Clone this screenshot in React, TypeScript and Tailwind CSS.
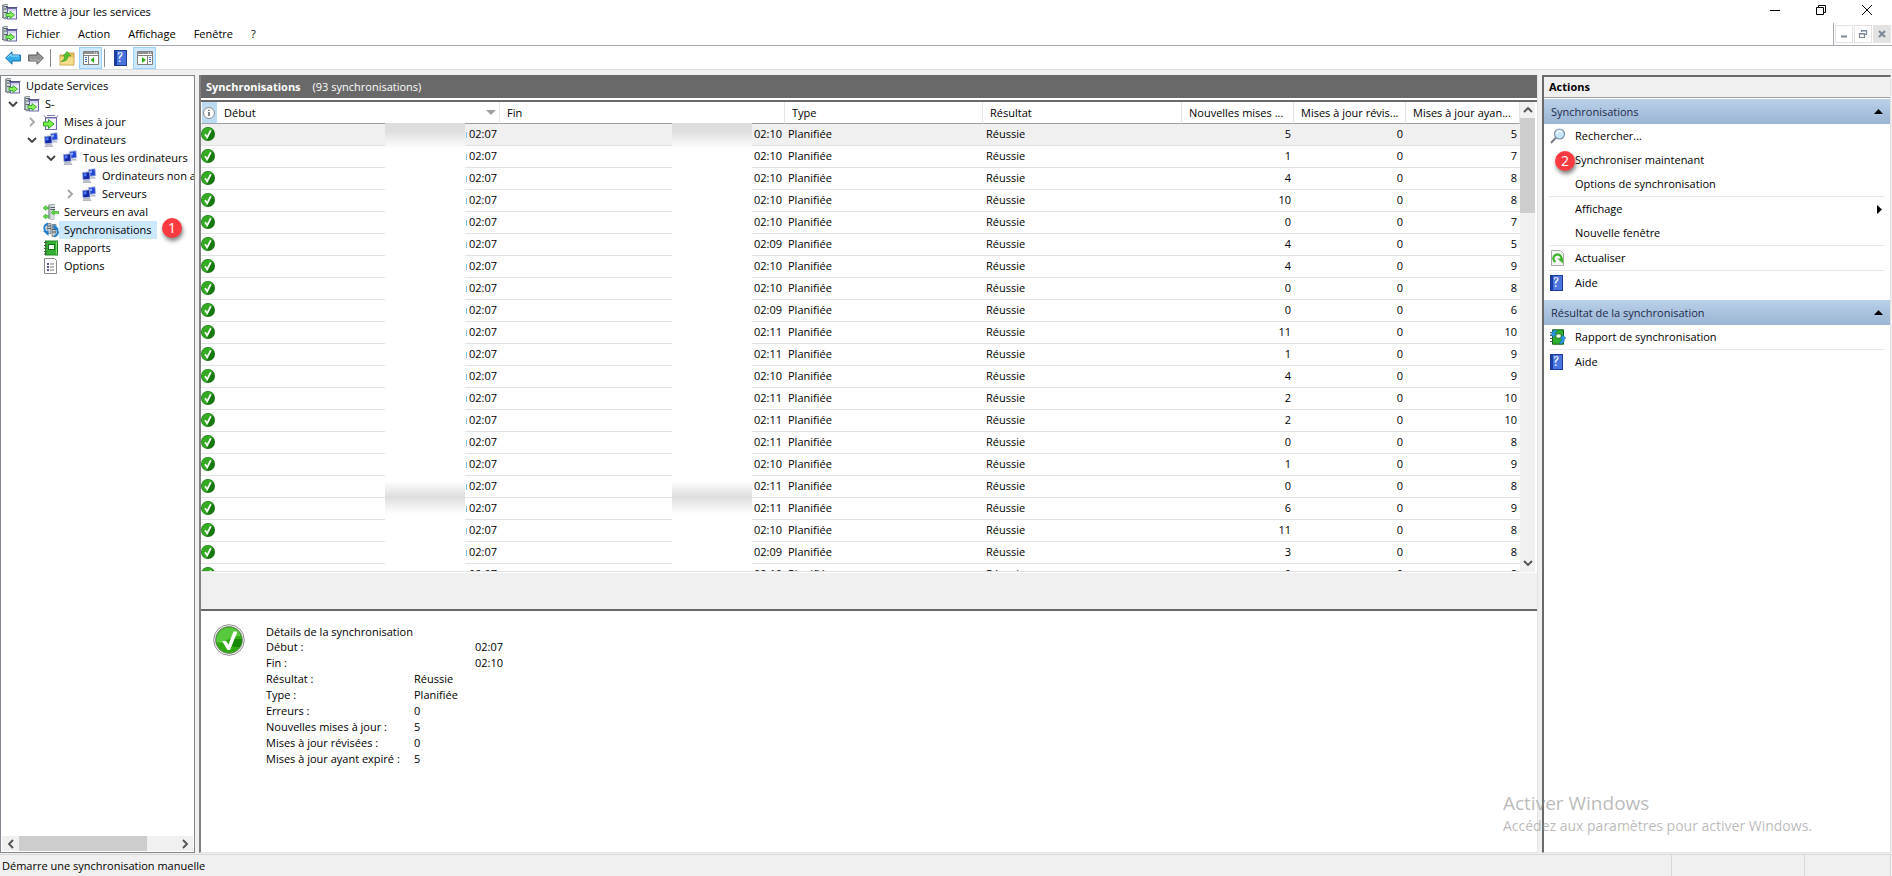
import type { ReactNode } from 'react';
import clsx from 'clsx';

interface IconProps { className?: string; }

function ServicesIcon({ className = 'size-4' }: IconProps) {
  return (
    <svg viewBox="0 0 16 16" className={className} aria-hidden="true">
      <path d="M0 1l2-1h4v14H0z" fill="#8d999c" />
      <path d="M2 1h4v12H2z" fill="#d0d8d9" />
      <path d="M2 2.500h4M2 5h4M2 8.500h4" stroke="#566266" />
      <path d="M0 13l3 2 3-1" fill="none" stroke="#6c7678" />
      <rect x="5.500" y="4.500" width="9" height="10.500" fill="#eeeef8" stroke="#6a68a8" />
      <path d="M4 3.500h11M15 3.500l1-1" stroke="#55538c" />
      <path d="M6 6h8" stroke="#b9b7dd" />
      <path d="M4 9.500h4V7.500l4.500 3.500L8 14.500v-2H4z" fill="#8cf25c" stroke="#2fa52c" strokeWidth=".9" />
    </svg>
  );
}

function UpdatesIcon() {
  return (
    <svg viewBox="0 0 16 16" className="size-4" aria-hidden="true">
      <rect x="2.500" y="3.500" width="11" height="12" fill="#f4f4fc" stroke="#6a68a8" />
      <path d="M1 1.500l1.500 2M15 1.500l-1.500 2M4 1.500h8" stroke="#7d7bab" fill="none" />
      <path d="M3 4.500h10" stroke="#b9b7dd" />
      <path d="M.5 8h5V5.500L11 10l-5.500 4.500V12h-5z" fill="#7af048" stroke="#2fa52c" />
    </svg>
  );
}

function ComputersIcon() {
  return (
    <svg viewBox="0 0 16 16" className="size-4" aria-hidden="true">
      <path d="M7.500 1.500l6.500-.8.800 7-6.300.8z" fill="#2347d8" stroke="#b4bedb" strokeWidth=".9" />
      <path d="M9 2.700l2-.3v2.300l-2 .2z" fill="#8fb0ff" />
      <path d="M10 9h4l1 1.500h-5z" fill="#b7bcc9" />
      <path d="M1.300 4.500l7.400-.8.500 7.500-7.200.7z" fill="#1326a8" stroke="#b4bedb" strokeWidth=".9" />
      <path d="M2.500 5.500l3-.3v3l-3 .2z" fill="#4b7bf5" />
      <path d="M3 12.500h5.500l1.500 2H2z" fill="#c3c7d1" stroke="#8a8f9c" strokeWidth=".5" />
    </svg>
  );
}

function DownstreamIcon() {
  return (
    <svg viewBox="0 0 16 16" className="size-4" aria-hidden="true">
      <path d="M5 1l2-1h5v15l-2 1-5-1z" fill="#a2acae" />
      <path d="M7.500 1H12v14H7.500z" fill="#d8dedf" />
      <path d="M7.500 3.500H12M7.500 5.500H12" stroke="#566266" />
      <path d="M0 4l3-2.500V3h2.500v2H3v1.500zM0 12.500L3 10v1.500h2.500v2H3V15zM8 8.500L11 6v1.500h5v2h-5V11z" fill="#5fd844" stroke="#2a9a22" strokeWidth=".5" />
    </svg>
  );
}

function SyncIcon() {
  return (
    <svg viewBox="0 0 16 16" className="size-4" aria-hidden="true">
      <path d="M4 1.500h4v10H4zM9 2.500h4v12H9z" fill="#c2cacd" stroke="#626c71" strokeWidth=".7" />
      <path d="M4 4h4M4 6.500h4M9 5h4M9 7.500h4M9 10h4" stroke="#4c575c" strokeWidth=".9" />
      <path d="M5 1.500C1 2.500 .5 6 2.500 9.500" fill="none" stroke="#2180cf" strokeWidth="2" />
      <path d="M0 9h5.500v5z" fill="#2180cf" />
      <path d="M11 14.500c4-1 5-4.500 2.500-8" fill="none" stroke="#2180cf" strokeWidth="2" />
      <path d="M16 7h-5.500V2z" fill="#2180cf" />
    </svg>
  );
}

function ReportsIcon() {
  return (
    <svg viewBox="0 0 16 16" className="size-4" aria-hidden="true">
      <rect x="2.500" y="1" width="12" height="14" fill="#35b032" stroke="#1e8524" />
      <rect x="5.500" y="4.500" width="6" height="5" fill="#f4fff2" stroke="#12701a" />
      <path d="M13.500 1.500v13" stroke="#7bdc70" />
      <path d="M1 2.500h3M1 5.500h3M1 8.500h3M1 11.500h3M1 14h3" stroke="#4d5a4d" strokeWidth="1.200" />
    </svg>
  );
}

function OptionsIcon() {
  return (
    <svg viewBox="0 0 16 16" className="size-4" aria-hidden="true">
      <path d="M1.500.5h10l2 2v13h-12z" fill="#fff" stroke="#8a8a8a" />
      <path d="M4 5h2v2H4zM4 8h2v2H4zM4 11h2v2H4z" fill="#58589a" />
      <path d="M7 6h4M7 9h4M7 12h4" stroke="#777" />
    </svg>
  );
}

function HelpIcon() {
  return (
    <span className="flex h-4 w-[13px] items-center justify-center border border-[#1d3a97] bg-linear-to-r from-[#1d3da8] from-20% to-[#4a74de] to-20% font-serif text-sm leading-none text-white" aria-hidden="true">
      ?
    </span>
  );
}

function ToolArrow({ forward = false }: { forward?: boolean }) {
  return (
    <svg viewBox="0 0 16 14" className={clsx('h-3.5 w-4', forward && 'rotate-180')} aria-hidden="true">
      <path d="M.6 7L7 .8V4h8.400v6H7v3.200z" fill={forward ? '#969696' : '#35aeee'} stroke={forward ? '#5b5b5b' : '#1468a8'} />
      <path d="M2.500 6.500L6 3v2h8" fill="none" stroke={forward ? '#b5b5b5' : '#9be0ff'} />
    </svg>
  );
}

function FolderUpIcon() {
  return (
    <svg viewBox="0 0 16 16" className="size-4" aria-hidden="true">
      <path d="M1 5h7l1-2h6v12H1z" fill="#e9c560" stroke="#b98f2e" strokeWidth=".8" />
      <path d="M1.500 7.500h13v7h-13z" fill="#f7dc8c" />
      <path d="M2 11.500c3-1 3.500-3 3.500-5.500H4L8 1.500 12 6H9c0 4-2.500 5.500-7 5.500z" fill="#52c32c" stroke="#2a8a18" strokeWidth=".5" />
    </svg>
  );
}

function PaneIcon({ right = false }: { right?: boolean }) {
  return (
    <svg viewBox="0 0 16 14" className="h-3.5 w-4" aria-hidden="true">
      <path d="M.5.5h15v13H.5z" fill="#fff" stroke="#808080" />
      <path d="M1 1h14v2H1z" fill="#8f8f8f" />
      <path d="M11 2h1M13 2h1" stroke="#fff" />
      <path d={right ? 'M10.500 4v9M1 4.500h14' : 'M5.500 4v9M1 4.500h14'} stroke="#808080" />
      <path d={right ? 'M12 6.500h2M12 8.500h2M12 10.500h2' : 'M2 6.500h2M2 8.500h2M2 10.500h2'} stroke="#3d74b8" />
      <path d={right ? 'M5 6l4 3-4 3z' : 'M11 6L7.500 9l3.500 3z'} fill="#2fae1e" />
    </svg>
  );
}

function SearchIcon() {
  return (
    <svg viewBox="0 0 16 16" className="size-4" aria-hidden="true">
      <path d="M1 15l5-5.500" stroke="#7e7e88" strokeWidth="2" />
      <circle cx="9.500" cy="6" r="5" fill="#c8e6fa" stroke="#7c8fae" strokeWidth="1.200" />
      <path d="M6.500 5.500c1-2.500 4-3 5.500-1" stroke="#fff" strokeWidth="1.500" fill="none" />
    </svg>
  );
}

function RefreshIcon() {
  return (
    <svg viewBox="0 0 16 16" className="size-4" aria-hidden="true">
      <path d="M1.500.5h9l3 3v12h-12z" fill="#f6f6f6" stroke="#a9a9a9" />
      <path d="M5.500 12A4 4 0 1 1 10.500 11" fill="none" stroke="#3cb52c" strokeWidth="2.200" />
      <path d="M7.500 8.500h5.500v5z" fill="#3cb52c" />
    </svg>
  );
}

function SyncReportIcon() {
  return (
    <svg viewBox="0 0 16 16" className="size-4" aria-hidden="true">
      <path d="M2.500.8h11v14.400h-11z" fill="#2fb02c" stroke="#0d5c12" />
      <path d="M6 5h5v4H6z" fill="#f4fff2" stroke="#0d5c12" strokeWidth=".7" />
      <path d="M0 3.500h3M0 6.500h3M0 9.500h3M0 12.500h3" stroke="#4d5a4d" />
      <path d="M6 1C3 1 1.500 2.500 2 5H.5l3 3.500L6.500 5H5c0-1.500.5-2 2-2zM10 15c3.500 0 4.500-2.500 4.500-5.500H16l-3-3.500-3 3.500h1.500c0 2.500-.5 3.500-2 3.500z" fill="#2a94de" stroke="#14609c" strokeWidth=".4" />
    </svg>
  );
}

function Check({ className = 'size-3.5' }: IconProps) {
  return (
    <svg viewBox="0 0 14 14" className={className} aria-hidden="true">
      <circle cx="7" cy="7" r="7" fill="#16780e" />
      <path d="M.8 7.500A6.300 6.300 0 0 1 12 3C9 4.500 7 7 6 13 3 12.800.8 10.500.8 7.500z" fill="#35ab24" />
      <path d="M4 7.300l2.200 3L9.800 3.300" fill="none" stroke="#fff" strokeWidth="1.800" />
    </svg>
  );
}

function BigCheck() {
  return (
    <svg viewBox="0 0 32 32" className="size-8" aria-hidden="true">
      <circle cx="16" cy="16" r="15.300" fill="#fff" stroke="#8a8a8a" />
      <circle cx="16" cy="16" r="13.500" fill="#2faa12" stroke="#777" strokeWidth=".8" />
      <path d="M3.500 18A12.700 12.700 0 0 1 28 12C20 12 13 16 9 19z" fill="#58c93c" />
      <path d="M20 15h9a13 13 0 0 1-2 8c-3 0-7 0-10-2z" fill="#178708" />
      <path d="M9 17l4 0 2.500 3.500L20.500 7.500h4L17 26h-2.500z" fill="#fff" />
    </svg>
  );
}

function Chevron({ dir, className }: { dir: 'up' | 'down' | 'left' | 'right'; className?: string }) {
  const paths = { up: 'M1 7l4-4 4 4', down: 'M1 3l4 4 4-4', left: 'M7 1L3 5l4 4', right: 'M3 1l4 4-4 4' };
  return (
    <svg viewBox="0 0 10 10" className={clsx('size-2.5', className)} aria-hidden="true">
      <path d={paths[dir]} fill="none" stroke="currentColor" strokeWidth="1.800" />
    </svg>
  );
}

function Badge({ children, className }: { children: ReactNode; className?: string }) {
  return (
    <span className={clsx('absolute z-10 flex size-5 items-center justify-center rounded-full bg-[#fb3b41] text-sm text-white shadow-[1px_3px_4px_rgba(0,0,0,0.5)]', className)}>
      {children}
    </span>
  );
}

interface TreeNode { label: string; icon: ReactNode; pad: string; open?: boolean; selected?: boolean; }

const tree: TreeNode[] = [
  { label: 'Update Services', icon: <ServicesIcon />, pad: 'pl-1' },
  { label: 'S-', icon: <ServicesIcon />, pad: 'pl-[23px]', open: true },
  { label: 'Mises à jour', icon: <UpdatesIcon />, pad: 'pl-[42px]', open: false },
  { label: 'Ordinateurs', icon: <ComputersIcon />, pad: 'pl-[42px]', open: true },
  { label: 'Tous les ordinateurs', icon: <ComputersIcon />, pad: 'pl-[61px]', open: true },
  { label: 'Ordinateurs non a', icon: <ComputersIcon />, pad: 'pl-20' },
  { label: 'Serveurs', icon: <ComputersIcon />, pad: 'pl-20', open: false },
  { label: 'Serveurs en aval', icon: <DownstreamIcon />, pad: 'pl-[42px]' },
  { label: 'Synchronisations', icon: <SyncIcon />, pad: 'pl-[42px]', selected: true },
  { label: 'Rapports', icon: <ReportsIcon />, pad: 'pl-[42px]' },
  { label: 'Options', icon: <OptionsIcon />, pad: 'pl-[42px]' },
];

// end time, new updates, revised, expired
const rows: [string, number, number, number][] = [
  ['02:10', 5, 0, 5],
  ['02:10', 1, 0, 7],
  ['02:10', 4, 0, 8],
  ['02:10', 10, 0, 8],
  ['02:10', 0, 0, 7],
  ['02:09', 4, 0, 5],
  ['02:10', 4, 0, 9],
  ['02:10', 0, 0, 8],
  ['02:09', 0, 0, 6],
  ['02:11', 11, 0, 10],
  ['02:11', 1, 0, 9],
  ['02:10', 4, 0, 9],
  ['02:11', 2, 0, 10],
  ['02:11', 2, 0, 10],
  ['02:11', 0, 0, 8],
  ['02:10', 1, 0, 9],
  ['02:11', 0, 0, 8],
  ['02:11', 6, 0, 9],
  ['02:10', 11, 0, 8],
  ['02:09', 3, 0, 8],
  ['02:10', 0, 0, 8],
];

const details = [
  ['Début :', '02:07', true],
  ['Fin :', '02:10', true],
  ['Résultat :', 'Réussie', false],
  ['Type :', 'Planifiée', false],
  ['Erreurs :', '0', false],
  ['Nouvelles mises à jour :', '5', false],
  ['Mises à jour révisées :', '0', false],
  ['Mises à jour ayant expiré :', '5', false],
] as const;

function TitleBar() {
  return (
    <header className="flex h-[23px] items-center pl-0.5">
      <ServicesIcon />
      <h1 className="pl-[5px]">Mettre à jour les services</h1>
      <div className="ml-auto mr-0.5 flex self-start">
        <button aria-label="Réduire" className="flex h-5 w-[46px] items-center justify-center">
          <svg viewBox="0 0 10 10" className="size-2.5"><path d="M0 5.500h10" stroke="#000" /></svg>
        </button>
        <button aria-label="Restaurer" className="flex h-5 w-[46px] items-center justify-center">
          <svg viewBox="0 0 10 10" className="size-2.5"><path d="M.5 2.500h7v7h-7zM2.500 2.500v-2h7v7h-2" fill="none" stroke="#000" /></svg>
        </button>
        <button aria-label="Fermer" className="flex h-5 w-[46px] items-center justify-center">
          <svg viewBox="0 0 10 10" className="size-2.5"><path d="M0 0l10 10M10 0L0 10" stroke="#000" /></svg>
        </button>
      </div>
    </header>
  );
}

function MenuBar() {
  return (
    <div className="flex h-[23px] items-center border-b border-[#a8a8b0] pl-0.5">
      <ServicesIcon />
      <nav className="flex gap-0.5">
        {['Fichier', 'Action', 'Affichage', 'Fenêtre', '?'].map((item) => (
          <button key={item} className="px-2">{item}</button>
        ))}
      </nav>
      <div className="ml-auto flex h-full items-center gap-px border-l border-[#a8a8b0] px-px text-[#7a8898]">
        <button aria-label="Réduire la fenêtre" className="flex size-[18px] items-center justify-center border border-[#e3e3e3]">
          <svg viewBox="0 0 10 10" className="size-2.5"><path d="M2 7.500h6" stroke="currentColor" strokeWidth="2" /></svg>
        </button>
        <button aria-label="Restaurer la fenêtre" className="flex size-[18px] items-center justify-center border border-[#e3e3e3]">
          <svg viewBox="0 0 10 10" className="size-2.5"><path d="M1.500 4.500h5v4h-5zM1 5h6M3.500 3V1.500h5v4H7M3 2h6" fill="none" stroke="currentColor" strokeWidth="1.200" /></svg>
        </button>
        <button aria-label="Fermer la fenêtre" className="flex size-[18px] items-center justify-center bg-[#e3e3e3]">
          <svg viewBox="0 0 10 10" className="size-2.5"><path d="M2 2l6 6M8 2L2 8" stroke="currentColor" strokeWidth="2" /></svg>
        </button>
      </div>
    </div>
  );
}

function ToolBar() {
  return (
    <div className="flex h-6 items-center border-b border-[#dadada] pl-[5px] pt-px">
      <button aria-label="Précédent"><ToolArrow /></button>
      <button aria-label="Suivant" className="ml-[7px]"><ToolArrow forward /></button>
      <span className="ml-1.5 h-[18px] w-px bg-[#8c8c8c]" />
      <button aria-label="Dossier parent" className="ml-2"><FolderUpIcon /></button>
      <button aria-label="Afficher l'arborescence" className="ml-1 flex h-full w-[23px] items-center justify-center border border-[#99d1ff] bg-[#cce8ff]">
        <PaneIcon />
      </button>
      <span className="ml-0.5 h-[18px] w-px bg-[#8c8c8c]" />
      <button aria-label="Aide" className="ml-[9px]"><HelpIcon /></button>
      <button aria-label="Afficher le volet Actions" className="ml-1.5 flex h-full w-[23px] items-center justify-center border border-[#99d1ff] bg-[#cce8ff]">
        <PaneIcon right />
      </button>
    </div>
  );
}

function TreePanel() {
  return (
    <aside className="relative flex w-[195px] shrink-0 flex-col border border-[#828790] bg-white">
      <ul className="flex-1 overflow-hidden pt-px">
        {tree.map((node) => (
          <li key={node.label} className={clsx('flex h-[18px] items-center whitespace-nowrap', node.pad)}>
            {node.open !== undefined && (
              <Chevron
                dir={node.open ? 'down' : 'right'}
                className={clsx('-ml-4 mr-1.5 shrink-0', node.open ? 'text-[#404040]' : 'text-[#a6a6a6]')}
              />
            )}
            <span className="shrink-0">{node.icon}</span>
            <a href="#" className={clsx('pl-[5px] leading-[18px]', node.selected && 'bg-[#cce8ff] pr-[5px]')}>{node.label}</a>
          </li>
        ))}
      </ul>
      <Badge className="left-[161px] top-[142px]">1</Badge>
      <div className="mx-px mb-px flex h-[15px] items-center bg-[#f0f0f0] text-[#505050]">
        <span className="flex w-[17px] justify-center"><Chevron dir="left" /></span>
        <span className="h-full w-32 bg-[#cdcdcd]" />
        <span className="ml-auto flex w-[17px] justify-center"><Chevron dir="right" /></span>
      </div>
    </aside>
  );
}

// Faded band that hides the dates of a column
function Mask({ className }: { className: string }) {
  return (
    <div className={clsx('absolute inset-y-0 top-[21px] flex w-20 flex-col bg-white', className)}>
      <div className="h-[26px] bg-linear-to-b from-[#dedede] from-30% to-white" />
      <div className="mt-[332px] h-4 bg-linear-to-b from-white to-[#dedede]" />
      <div className="h-[17px] bg-linear-to-b from-[#dedede] to-white" />
    </div>
  );
}

const th = 'whitespace-nowrap border-r border-[#e5e5e5] py-0 pl-[7px] pr-[3px] font-normal';

function SyncList() {
  return (
    <div className="flex min-h-0 flex-1 border-t-2 border-[#696969] bg-white">
      <div className="relative min-w-0 flex-1 overflow-hidden border-b border-[#e0e0e0]">
        <table className="w-full table-fixed border-separate border-spacing-0 text-left">
          <colgroup>
            <col className="w-4" />
            <col className="w-[283px]" />
            <col />
            <col className="w-[198px]" />
            <col className="w-[199px]" />
            <col className="w-28" />
            <col className="w-28" />
            <col className="w-[114px]" />
          </colgroup>
          <thead>
            <tr className="h-[22px] [&>th]:border-b [&>th]:border-b-[#a0a0a0]">
              <th aria-label="État" className="border-l border-l-white bg-[#bcdcf4] p-0">
                <svg viewBox="0 0 14 14" className="size-3.5">
                  <circle cx="7" cy="7" r="5.500" fill="#fff" stroke="#8a8a8a" />
                  <path d="M7 6v4M7 3.800v1.200" stroke="#333" strokeWidth="1.200" />
                </svg>
              </th>
              <th className={th}>
                <span className="flex items-center justify-between">
                  Début
                  <svg viewBox="0 0 10 5" className="h-[5px] w-2.5"><path d="M0 0h10L5 5z" fill="#a0a0a0" /></svg>
                </span>
              </th>
              <th className={th}>Fin</th>
              <th className={th}>Type</th>
              <th className={th}>Résultat</th>
              <th className={th}>Nouvelles mises ...</th>
              <th className={th}>Mises à jour révis...</th>
              <th className={th}>Mises à jour ayan...</th>
            </tr>
          </thead>
          <tbody>
            {rows.map(([end, added, revised, expired], i) => (
              <tr key={i} className={clsx('h-[22px] [&>td]:border-b [&>td]:border-[#e2e2e2] [&>td]:px-[3px] [&>td]:pb-0.5 [&>td]:pt-0', i === 0 && 'bg-[#f0f0f0]')}>
                <td className="px-0!"><Check className="size-3.5" /></td>
                <td className="text-right">
                  <span className="mr-0.5 inline-block h-1.5 w-px bg-[#7cc4f0]" />
                  02:07
                </td>
                <td className="text-right">{end}</td>
                <td>Planifiée</td>
                <td>Réussie</td>
                <td className="text-right">{added}</td>
                <td className="text-right">{revised}</td>
                <td className="text-right">{expired}</td>
              </tr>
            ))}
          </tbody>
        </table>
        <Mask className="left-[184px]" />
        <Mask className="left-[471px]" />
      </div>
      <div className="mr-0.5 flex w-[15px] flex-col items-center bg-[#f0f0f0] text-[#505050]">
        <span className="flex h-4 items-center"><Chevron dir="up" /></span>
        <span className="h-[95px] w-full bg-[#cdcdcd]" />
        <span className="mt-auto flex h-[18px] items-center"><Chevron dir="down" /></span>
      </div>
    </div>
  );
}

function SyncDetails() {
  return (
    <section className="flex h-[243px] shrink-0 border-t-2 border-[#696969] bg-white pl-3 pt-[13px]">
      <BigCheck />
      <div className="pl-[21px]">
        <h2 className="leading-[15px]">Détails de la synchronisation</h2>
        <dl>
          {details.map(([label, value, shifted]) => (
            <div key={label} className="flex leading-4">
              <dt className="w-[148px]">{label}</dt>
              <dd className={shifted ? 'pl-[61px]' : ''}>{value}</dd>
            </div>
          ))}
        </dl>
      </div>
    </section>
  );
}

function ActionGroup({ title, children }: { title: string; children: ReactNode }) {
  return (
    <section className="mb-[5px]">
      <h3 className="flex h-[25px] items-center justify-between bg-linear-to-b from-[#bad1e9] to-[#9ab4d3] px-[7px] text-[#1a2b4a]">
        {title}
        <svg viewBox="0 0 9 5" className="h-[5px] w-[9px]"><path d="M0 5h9L4.500 0z" fill="#000" /></svg>
      </h3>
      {children}
    </section>
  );
}

function ActionItem({ label, icon, sub, divided }: { label: string; icon?: ReactNode; sub?: boolean; divided?: boolean }) {
  return (
    <>
      <button className="flex h-6 w-full items-center pl-1.5 pr-2 text-left">
        <span className="flex w-[25px]">{icon}</span>
        {label}
        {sub && <svg viewBox="0 0 5 9" className="ml-auto h-[9px] w-[5px]"><path d="M0 0v9l5-4.500z" fill="#000" /></svg>}
      </button>
      {divided && <hr className="mx-[5px] border-[#e8e8e8]" />}
    </>
  );
}

function ActionsPanel() {
  return (
    <aside className="relative w-[349px] shrink-0 border-b border-l-2 border-r border-t-2 border-[#696969] border-b-[#e3e3e3] border-r-[#e3e3e3] bg-white">
      <h2 className="mb-px flex h-[21px] items-center border-b border-[#a0a0a0] bg-[#f0f0f0] pl-[5px] font-bold">Actions</h2>
      <ActionGroup title="Synchronisations">
        <ActionItem label="Rechercher..." icon={<SearchIcon />} />
        <ActionItem label="Synchroniser maintenant" />
        <ActionItem label="Options de synchronisation" divided />
        <ActionItem label="Affichage" sub />
        <ActionItem label="Nouvelle fenêtre" divided />
        <ActionItem label="Actualiser" icon={<RefreshIcon />} divided />
        <ActionItem label="Aide" icon={<HelpIcon />} />
      </ActionGroup>
      <ActionGroup title="Résultat de la synchronisation">
        <ActionItem label="Rapport de synchronisation" icon={<SyncReportIcon />} divided />
        <ActionItem label="Aide" icon={<HelpIcon />} />
      </ActionGroup>
      <Badge className="left-[11px] top-[74px]">2</Badge>
    </aside>
  );
}

export default function App() {
  return (
    <div className='relative flex h-screen flex-col overflow-hidden bg-white font-["Open_Sans","Noto_Sans",sans-serif] text-[11px] leading-4 text-black'>
      <TitleBar />
      <MenuBar />
      <ToolBar />
      <div className="flex min-h-0 flex-1 gap-1 bg-[#f0f0f0] pb-px pr-px pt-[5px]">
        <TreePanel />
        <main className="flex min-w-0 flex-1 flex-col border-b border-l-2 border-r border-[#e3e3e3] border-l-[#808080]">
          <div className="flex h-[23px] items-center bg-[#696969] pl-[5px] text-white">
            <h2 className="font-bold">Synchronisations</h2>
            <span className="pl-3">(93 synchronisations)</span>
          </div>
          <div className="h-0.5 bg-white" />
          <SyncList />
          <div className="h-[37px] shrink-0 border-t border-white" />
          <SyncDetails />
        </main>
        <ActionsPanel />
      </div>
      <footer className="flex h-[22px] items-center border-t border-[#d7d7d7] bg-[#f0f0f0] pl-0.5">
        <span className="flex-1">Démarre une synchronisation manuelle</span>
        <span className="h-full w-[133px] border-l border-[#d7d7d7]" />
        <span className="mr-px h-full w-[87px] border-x border-[#d7d7d7]" />
      </footer>
      <div className="pointer-events-none absolute bottom-10 right-20 text-[#8c8c8c]/60">
        <p className="text-[19px] leading-[25px]">Activer Windows</p>
        <p className="text-sm leading-5">Accédez aux paramètres pour activer Windows.</p>
      </div>
    </div>
  );
}
